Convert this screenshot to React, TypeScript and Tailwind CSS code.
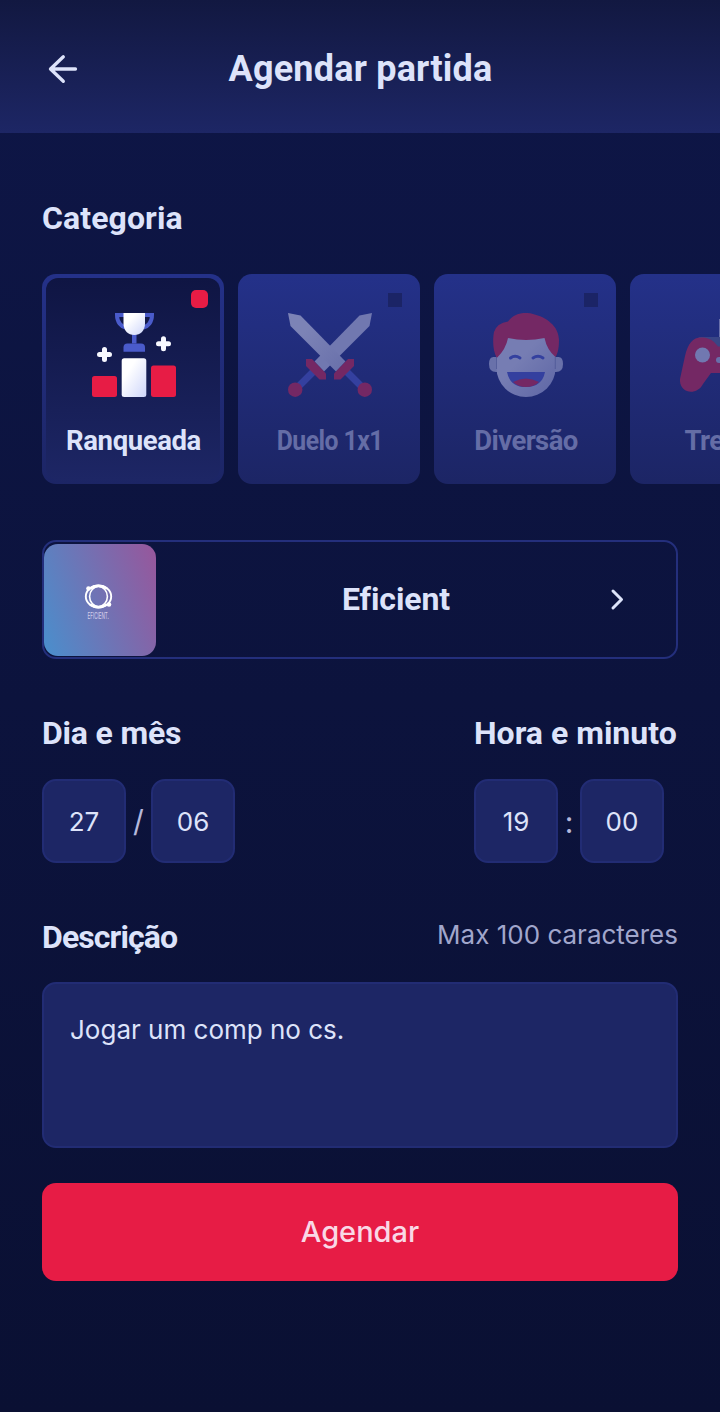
import React from "react";

const heading = "font-['Roboto',sans-serif] font-bold text-[#dde3fa] whitespace-nowrap";

function PodiumIcon() {
  return (
    <svg className="relative left-px" width="84" height="84" viewBox="0 0 84 84" fill="none">
      <defs>
        <linearGradient id="podium" x1="0" y1="0" x2="1" y2="1">
          <stop offset="0.3" stopColor="#fff" />
          <stop offset="1" stopColor="#ced6fb" />
        </linearGradient>
      </defs>
      <path d="M33 2H25c0 7 4 11.500 8.500 12.500M53 2h7c0 7-4 11.500-8.500 12.500" stroke="#4a5bcb" strokeWidth="4" />
      <path d="M40 20h4.500v10.500h-4.500z" fill="#4a5bcb" />
      <path d="M31.500 38.700v-4.200a4 4 0 0 1 4-4h13.500a4 4 0 0 1 4 4v4.200z" fill="#4a5bcb" />
      <path d="M31.500 0h21.500v10.500c0 7-4.500 11.500-10.700 11.500s-10.800-4.500-10.800-11.500z" fill="url(#podium)" />
      <rect x="0" y="63" width="25" height="21" rx="2.500" fill="#e71c45" />
      <rect x="29.700" y="45.300" width="24.600" height="38.700" rx="2.500" fill="url(#podium)" />
      <rect x="59" y="52.500" width="25" height="31.500" rx="2.500" fill="#e71c45" />
      <path d="M12.500 36.500v10M7.500 41.500h10M71.500 25.700v10M66.500 30.700h10" stroke="#f7f8ff" strokeWidth="5" strokeLinecap="round" />
    </svg>
  );
}

function SwordsIcon() {
  return (
    <svg className="relative left-px" width="84" height="84" viewBox="0 0 84 84" fill="none">
      <defs>
        <linearGradient id="blade" x1="0" y1="0" x2="1" y2="1">
          <stop offset="0.3" stopColor="#7c83b6" />
          <stop offset="1" stopColor="#686faa" />
        </linearGradient>
      </defs>
      <path d="M11 73L26 58M73 73L58 58" stroke="#34409f" strokeWidth="7" />
      <path d="M84 0l-12.500 2.500L26.500 48.500l9.500 10L81.500 13z" fill="#7178b0" />
      <path d="M0 0l12.500 2.500L57.500 48.500l-9.500 10L2.500 13z" fill="url(#blade)" />
      <path d="M18 46h6l14 14.500v6h-6.500L18 53z" fill="#742864" />
      <path d="M66 46h-6L46 60.500v6h6.500L66 53z" fill="#742864" />
      <circle cx="7.200" cy="76.700" r="7.200" fill="#742864" />
      <circle cx="76.800" cy="76.700" r="7.200" fill="#742864" />
    </svg>
  );
}

function LaughIcon() {
  return (
    <svg className="relative left-px" width="84" height="84" viewBox="0 0 84 84" fill="none">
      <defs>
        <linearGradient id="face" x1="0" y1="0" x2="1" y2="1">
          <stop offset="0.4" stopColor="#767db3" />
          <stop offset="1" stopColor="#5e66a5" />
        </linearGradient>
      </defs>
      <path d="M13 44H9.500Q5 44 5 51q0 8 7 8h2zM71 44h3.500Q79 44 79 51q0 8-7 8h-2z" fill="#6971aa" />
      <path d="M12.500 38L24 20h36l11.500 18v17a29.500 29 0 0 1-59 0z" fill="url(#face)" />
      <path d="M12.800 45C8 36 9 24 10 19Q13 10 24 8.500C31-1 42-1 49 1C62 4 75 13 75 27C75 35 74 40 71.500 44Q63 37 60.500 25Q42 29 24 25Q22 36 12.800 45z" fill="#742864" />
      <path d="M12.500 44v12M71.300 44v12" stroke="#4b5494" strokeWidth="0.700" />
      <path d="M26.500 45q4.500-3.500 9.500 0M49 45q5-3.500 10 0" stroke="#34409f" strokeWidth="3" strokeLinecap="round" />
      <path d="M23 59h38q-3 15-19 15T23 59z" fill="#34409f" />
      <path d="M29 69q13-7 26 0-5 5-13 5t-13-5z" fill="#742864" />
    </svg>
  );
}

function GamepadIcon() {
  return (
    <svg className="relative left-px" width="84" height="84" viewBox="0 0 84 84" fill="none">
      <path d="M40 6h4v20h-4z" fill="#742864" />
      <path d="M39.500 6v20" stroke="#686faa" strokeWidth="1" />
      <path d="M18 24h48v10H35z" fill="#394586" />
      <path d="M5 43C8 30 13 24.500 21 24.500c8 0 12 2.500 17 9h8c5-6.500 9-9 17-9 8 0 13 5.500 16 18.500l5 22c1 17-18 18-23 6L51 60H31L23 71C17 83-1 81 0 66z" fill="#742864" />
      <circle cx="22.500" cy="42" r="7.500" fill="#7178b0" />
      <circle cx="39" cy="47" r="3" fill="#686faa" />
    </svg>
  );
}

const inactive = [
  { name: "Duelo 1x1", icon: <SwordsIcon />, spacing: "scale-x-[0.900] tracking-[-0.600px]" },
  { name: "Diversão", icon: <LaughIcon />, spacing: "tracking-[-0.600px]" },
  { name: "Treino", icon: <GamepadIcon />, spacing: "tracking-[-0.700px]" },
];

function Digits({ value }: { value: string }) {
  return (
    <div className="flex size-[84px] items-center justify-center rounded-[14px] border-2 border-[#222c74] bg-[#1d2665] text-[26px] text-[#dde3fa]">
      {value}
    </div>
  );
}

export default function App() {
  return (
    <div className="h-[1412px] w-[720px] overflow-hidden bg-linear-to-b from-[#0e1647] to-[#0a1033] font-['Inter',sans-serif] text-[#dde3fa]">
      <header className="flex h-[133px] items-center bg-linear-to-b from-[#121841] to-[#1d2665] px-[42px] pt-[4px]">
        <svg width="42" height="42" viewBox="0 0 42 42" fill="none" stroke="#dde3fa" strokeWidth="3.300" strokeLinecap="round" strokeLinejoin="round">
          <path d="M33.500 21H8.500M21.300 8.800L8.500 21l12.800 12.300" />
        </svg>
        <h1 className={`${heading} flex-1 pr-[41px] text-center text-[36px] leading-[40px] tracking-[0.200px]`}>Agendar partida</h1>
      </header>

      <main className="px-[42px] pt-[65px]">
        <h2 className={`${heading} h-[76px] text-[32px] leading-[40px] tracking-[0.100px]`}>Categoria</h2>

        <div className="flex gap-[14px]">
          <div className="h-[210px] w-[182px] shrink-0 rounded-[14px] bg-linear-to-b from-[#243189] to-[#1c2565] p-1">
            <div className="relative flex h-full flex-col items-center rounded-[12px] bg-linear-to-b from-[#0f1543] to-[#1d2665] pt-[35px]">
              <span className="absolute top-[12px] right-[12px] size-[17px] h-[18px] rounded-[5px] bg-[#e71c45]" />
              <PodiumIcon />
              <span className={`${heading} mt-[28px] pl-px text-[27.500px] leading-[32px] tracking-[-0.400px]`}>Ranqueada</span>
            </div>
          </div>
          {inactive.map((c) => (
            <div key={c.name} className="flex h-[210px] w-[182px] shrink-0 flex-col items-center rounded-[14px] bg-linear-to-b from-[#243189] to-[#1c2565] pt-[19px]">
              <span className="mr-[18px] -mb-[14px] size-[14px] self-end bg-[#1b2466]" />
              <div className="mt-[20px]">{c.icon}</div>
              <span className={`mt-[28px] pl-[2px] font-['Roboto',sans-serif] text-[27.500px] leading-[32px] font-bold whitespace-nowrap text-[#656da6] ${c.spacing}`}>{c.name}</span>
            </div>
          ))}
        </div>

        <div className="mt-[56px] flex h-[119px] items-center rounded-[14px] border-2 border-[#242f7c]">
          <div className="flex size-[112px] flex-col items-center rounded-[14px] bg-linear-[70deg] from-[#498fcd] to-[#98569b] pt-[39px] pr-[3px]">
            <svg width="30" height="27" viewBox="0 0 30 27" fill="none" stroke="#fff">
              <ellipse cx="14.500" cy="13.500" rx="12.700" ry="11" strokeWidth="1.900" />
              <ellipse cx="14.500" cy="13.500" rx="8.900" ry="10" strokeWidth="1.600" />
              <path d="M6 5.500q8-5.500 17 0M6 21.500q8 5.500 17 0" strokeWidth="2.500" />
              <circle cx="4.500" cy="5.500" r="2.300" fill="#fff" stroke="none" />
              <circle cx="25" cy="21.500" r="2.300" fill="#fff" stroke="none" />
            </svg>
            <span className="scale-x-[0.500] text-[9px] leading-[12px] whitespace-nowrap text-[#d9d3ed]">EFICIENT.</span>
          </div>
          <span className={`${heading} flex-1 pb-[2px] pl-[33px] text-center text-[32px] leading-[40px] tracking-[-0.100px] [font-variant-ligatures:none]`}>Eficient</span>
          <svg className="mr-[45px] mb-px" width="28" height="28" viewBox="0 0 28 28" fill="none" stroke="#dde3fa" strokeWidth="3" strokeLinecap="round" strokeLinejoin="round">
            <path d="M10 6l8.500 8.500-8.500 8.500" />
          </svg>
        </div>

        <div className="mt-[55px] flex justify-between">
          <section>
            <h2 className={`${heading} h-[65px] text-[32px] leading-[39px] tracking-[-0.200px]`}>Dia e mês</h2>
            <div className="flex items-center">
              <Digits value="27" />
              <span className="w-[25px] text-center text-[30px] text-[#b4b8dc]">/</span>
              <Digits value="06" />
            </div>
          </section>
          <section className="w-[204px]">
            <h2 className={`${heading} h-[65px] text-[32px] leading-[39px]`}>Hora e minuto</h2>
            <div className="flex items-center">
              <Digits value="19" />
              <span className="w-[22px] pt-[2px] text-center text-[30px] text-[#b4b8dc]">:</span>
              <Digits value="00" />
            </div>
          </section>
        </div>

        <div className="mt-[54px] flex h-[65px] items-start justify-between">
          <h2 className={`${heading} text-[32px] leading-[40px] tracking-[-0.900px]`}>Descrição</h2>
          <span className="text-[26px] leading-[36px] text-[#a1a6cc]">Max 100 caracteres</span>
        </div>
        <div className="h-[166px] rounded-[14px] border-2 border-[#222c74] bg-[#1d2665] px-[26px] pt-[28px] text-[26px] leading-[36px]">
          Jogar um comp no cs.
        </div>
        <button className="mt-[35px] flex h-[98px] w-full items-center justify-center rounded-[14px] bg-[#e71c45] text-[29px] font-medium text-[#f9d8e6]">
          Agendar
        </button>
      </main>
    </div>
  );
}
